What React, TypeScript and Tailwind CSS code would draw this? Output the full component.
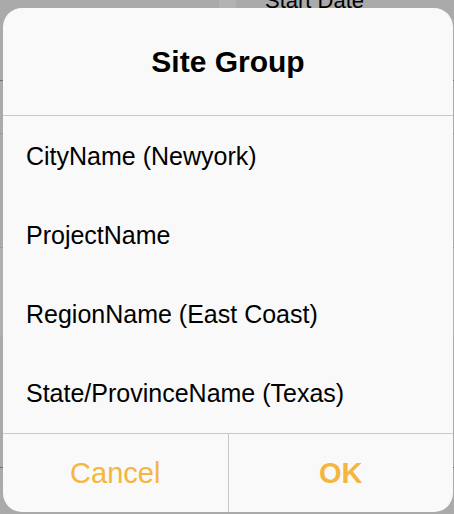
import React from 'react';

const options = [
  'CityName (Newyork)',
  'ProjectName',
  'RegionName (East Coast)',
  'State/ProvinceName (Texas)',
];

const Backdrop: React.FC = () => (
  <div className="flex flex-col h-full">
    <div className="h-[81px] border-b border-[#6e6e6e] flex">
      <div className="w-[219px]" />
      <div className="w-[17px] bg-[#b3b3b3]" />
      <div className="pl-[29px] text-[22px] leading-none text-black -mt-[10px]">Start Date</div>
    </div>
    <div className="h-[53px] border-b border-[#999999]" />
    <div className="h-[114px] border-b border-[#999999]" />
    <div className="h-[88px] bg-[#afafaf]" />
    <div className="h-[132px] border-b border-[#6e6e6e]" />
    <div className="flex-1" />
  </div>
);

const SiteGroupDialog: React.FC = () => (
  <div className="absolute left-[3px] top-[8px] w-[450px] h-[504px] rounded-[19px] bg-[#f9f9f9] overflow-hidden flex flex-col">
    <div className="h-[108px] flex items-center justify-center border-b border-[#c8c8c8]">
      <h2 className="text-[30px] leading-[30px] font-bold text-black">Site Group</h2>
    </div>
    <div className="flex flex-col pt-[1px]">
      {options.map((o) => (
        <div key={o} className="h-[79px] flex items-center pl-[23px] text-[25px] leading-[25px] text-black">
          {o}
        </div>
      ))}
    </div>
    <div className="flex-1 flex border-t border-[#c8c8c8]">
      <button className="flex-1 flex items-center justify-center text-[29px] leading-[29px] text-[#f4b640] border-r border-[#c8c8c8]">
        Cancel
      </button>
      <button className="flex-1 flex items-center justify-center text-[29px] leading-[29px] font-bold text-[#f4b640]">
        OK
      </button>
    </div>
  </div>
);

export default function App() {
  return (
    <div
      className="relative w-[454px] h-[514px] bg-[#aaaaaa] overflow-hidden"
      style={{ fontFamily: '"Liberation Sans", Arial, sans-serif' }}
    >
      <Backdrop />
      <SiteGroupDialog />
    </div>
  );
}
